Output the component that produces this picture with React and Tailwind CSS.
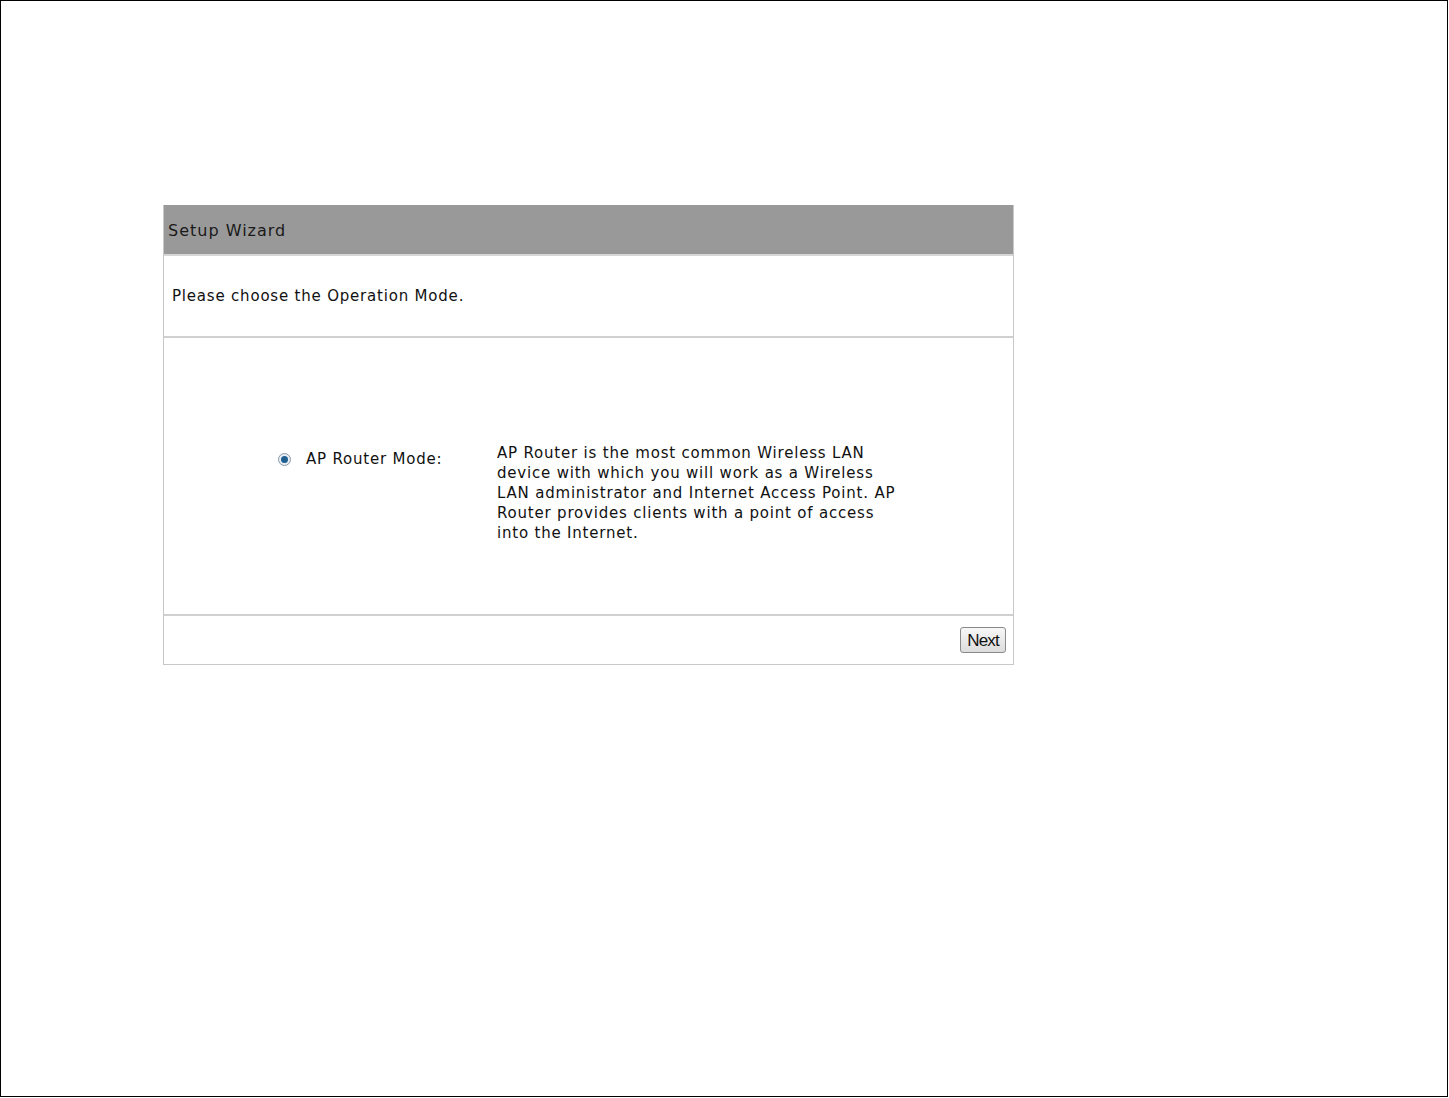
import React from "react";

function App() {
  const font = { fontFamily: '"DejaVu Sans", Verdana, sans-serif' };
  return (
    <div className="h-[1097px] w-[1448px] border border-black bg-white" style={font}>
      <div className="ml-[162px] mt-[204px] w-[851px] border border-[#c8c8c8] border-t-0">
        <div className="flex h-[49px] items-center bg-[#999999] pl-[4px] pt-[3px] text-[16px] tracking-[1px] text-[#1a1a1a]">
          Setup Wizard
        </div>
        <div className="flex h-[82px] items-center border-t-2 border-[#d6d6d6] pl-[8px] text-[15px] tracking-[0.8px] text-[#111]">
          Please choose the Operation Mode.
        </div>
        <div className="flex h-[278px] items-center justify-start border-t-2 border-[#d0d0d0] pl-[112px] pt-[34px]">
          <div className="flex items-start text-[15px] tracking-[0.8px] text-[#111]">
            <div className="flex w-[221px] items-center pt-[5px]">
              <span className="mr-[15px] ml-[2px] flex h-[13px] w-[13px] items-center justify-center rounded-full border border-[#8a9aa8] bg-[#e8eef3]">
                <span className="h-[7px] w-[7px] rounded-full bg-[#1f5f8f]"></span>
              </span>
              <span>AP Router Mode:</span>
            </div>
            <div className="w-[408px] leading-[20px]">
              AP Router is the most common Wireless LAN device with which you will work as a Wireless LAN administrator and Internet Access Point. AP Router provides clients with a point of access into the Internet.
            </div>
          </div>
        </div>
        <div className="flex h-[50px] items-center justify-end border-t-2 border-[#d0d0d0] pr-[7px]">
          <button className="h-[26px] rounded-[3px] border border-[#8a8a8a] bg-gradient-to-b from-[#f7f7f7] to-[#dcdcdc] px-[6px] text-[17px] tracking-[-0.8px] text-[#111]" style={{ fontFamily: '"Liberation Sans", Arial, sans-serif' }}>
            Next
          </button>
        </div>
      </div>
    </div>
  );
}

export default App;
